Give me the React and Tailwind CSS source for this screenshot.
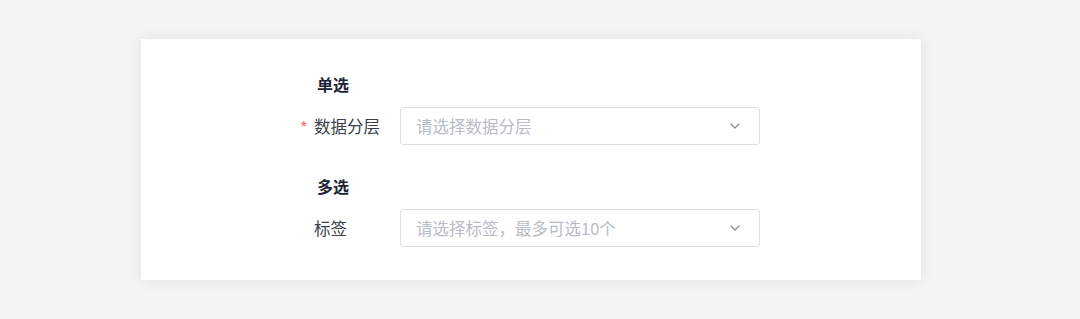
import { ChevronDown } from "lucide-react";

function Select({ placeholder }) {
  return (
    <div className="flex h-[38px] w-[360px] items-center justify-between rounded-[3px] border border-[#dcdfe6] bg-white pl-[15px] pr-[16px]">
      <span className="text-[16.5px] text-[#b8bcc4]">{placeholder}</span>
      <ChevronDown size={16} strokeWidth={2} className="text-[#8a8f99]" />
    </div>
  );
}

function Field({ label, required, placeholder }) {
  return (
    <div className="flex items-center">
      <div className="relative w-[100px] pl-[14px] text-[16.5px] text-[#3a3f4b]">
        {required && (
          <span className="absolute left-0 top-[1px] text-[#f56c6c]">*</span>
        )}
        {label}
      </div>
      <Select placeholder={placeholder} />
    </div>
  );
}

export default function App() {
  return (
    <div
      className="h-[319px] w-[1080px] bg-[#f4f4f4] pl-[141px] pt-[39px]"
      style={{ fontFamily: '"Noto Sans CJK SC", "Noto Sans", sans-serif' }}
    >
      <div className="h-[241px] w-[780px] bg-white pl-[159px] pt-[33px] shadow-[0_0_14px_rgba(0,0,0,0.08)]">
        {/* 单选 */}
        <div className="pl-[17px] text-[16px] font-bold leading-[24px] text-[#1d2433]">
          单选
        </div>
        <div className="mt-[11px]">
          <Field label="数据分层" required placeholder="请选择数据分层" />
        </div>

        {/* 多选 */}
        <div className="mt-[29px] pl-[17px] text-[16px] font-bold leading-[24px] text-[#1d2433]">
          多选
        </div>
        <div className="mt-[11px]">
          <Field label="标签" placeholder="请选择标签，最多可选10个" />
        </div>
      </div>
    </div>
  );
}
